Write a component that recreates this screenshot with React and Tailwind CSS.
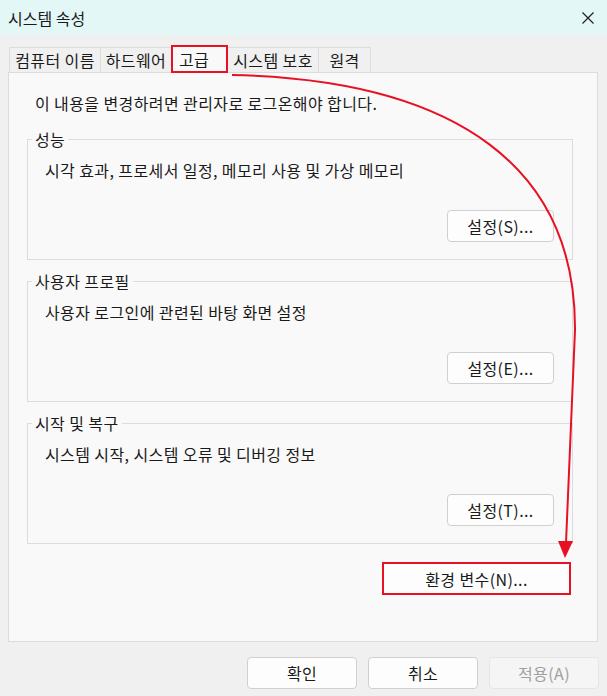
import React from "react";

const FONT = { fontFamily: '"Noto Sans CJK KR", "Noto Sans", sans-serif' };

const tabs = [
  { label: "컴퓨터 이름", w: "w-[92px]" },
  { label: "하드웨어", w: "w-[72px]" },
  { label: "고급", w: "w-[57px]" },
  { label: "시스템 보호", w: "w-[92px]" },
  { label: "원격", w: "w-[53px]" },
];

const groups = [
  { title: "성능", desc: "시각 효과, 프로세서 일정, 메모리 사용 및 가상 메모리", btn: "설정(S)..." },
  { title: "사용자 프로필", desc: "사용자 로그인에 관련된 바탕 화면 설정", btn: "설정(E)..." },
  { title: "시작 및 복구", desc: "시스템 시작, 시스템 오류 및 디버깅 정보", btn: "설정(T)..." },
];

const txt = "text-[16px] tracking-[0.4px] text-[#1a1a1a]";

function Group({ title, desc, btn }) {
  return (
    <fieldset className="w-[546px] border border-[#dcdcdc]">
      <legend className={`ml-[4px] px-[3px] leading-[20px] ${txt}`}>{title}</legend>
      <div className="h-[110px] flex flex-col pt-[11px] pb-[17px] pl-[17px] pr-[18px]">
        <div className={`leading-[20px] ${txt}`}>{desc}</div>
        <div className="mt-auto flex justify-end">
          <button className={`w-[107px] h-[32px] rounded-[4px] border border-[#d0d0d0] bg-[#fdfdfd] ${txt}`}>
            {btn}
          </button>
        </div>
      </div>
    </fieldset>
  );
}

export default function App() {
  return (
    <div className="relative w-[607px] h-[696px] bg-[#f0f0f0] overflow-hidden" style={FONT}>
      {/* title bar */}
      <div className="h-[35px] bg-[#e3f7f6] flex items-center justify-between pl-[8px] pr-[13px]">
        <span className="text-[16px] text-[#1a1a1a]">시스템 속성</span>
        <svg width="12" height="12" viewBox="0 0 12 12">
          <path d="M0.5 0.5 L11.5 11.5 M11.5 0.5 L0.5 11.5" stroke="#1a1a1a" strokeWidth="1.1" fill="none" />
        </svg>
      </div>

      {/* tabs */}
      <div className="flex items-end h-[37px] pl-[9px]">
        {tabs.map((t, i) =>
          i === 2 ? (
            <div
              key={t.label}
              className={`${t.w} h-[28px] -ml-px pl-[6px] flex items-center border-2 border-[#e81123] bg-[#f9f9f9] relative z-10 -mb-px ${txt}`}
            >
              {t.label}
            </div>
          ) : (
            <div
              key={t.label}
              className={`${t.w} h-[25px] -ml-px first:ml-0 flex items-center justify-center border border-b-0 border-[#dcdcdc] bg-[#f0f0f0] ${txt}`}
            >
              {t.label}
            </div>
          )
        )}
      </div>

      {/* panel */}
      <div className="ml-[8px] w-[590px] h-[570px] border border-[#dcdcdc] bg-[#f9f9f9] pl-[18px] pt-[20px]">
        <div className={`pl-[8px] leading-[20px] ${txt}`}>이 내용을 변경하려면 관리자로 로그온해야 합니다.</div>
        <div className="mt-[16px] flex flex-col gap-[11px]">
          {groups.map((g) => (
            <Group key={g.title} {...g} />
          ))}
        </div>
        <div className="mt-[18px] flex justify-end pr-[26px]">
          <button className={`w-[189px] h-[33px] border-2 border-[#e81123] bg-[#fdfdfd] ${txt}`}>
            환경 변수(N)...
          </button>
        </div>
      </div>

      {/* bottom buttons */}
      <div className="mt-[15px] flex justify-end gap-[11px] pr-[8px]">
        <button className={`w-[110px] h-[32px] rounded-[4px] border border-[#d0d0d0] bg-[#fdfdfd] ${txt}`}>확인</button>
        <button className={`w-[110px] h-[32px] rounded-[4px] border border-[#d0d0d0] bg-[#fdfdfd] ${txt}`}>취소</button>
        <button className="w-[110px] h-[32px] rounded-[4px] border border-[#e5e5e5] bg-[#f5f5f5] text-[16px] tracking-[0.4px] text-[#a0a0a0]">
          적용(A)
        </button>
      </div>

      {/* annotation arrow */}
      <svg className="absolute inset-0 pointer-events-none" width="607" height="696" viewBox="0 0 607 696">
        <path d="M232 75 C 460 80, 576 170, 575 330 L 566 543" stroke="#e81123" strokeWidth="2" fill="none" />
        <polygon points="558,541 573,541 565,558" fill="#e81123" />
      </svg>
    </div>
  );
}
